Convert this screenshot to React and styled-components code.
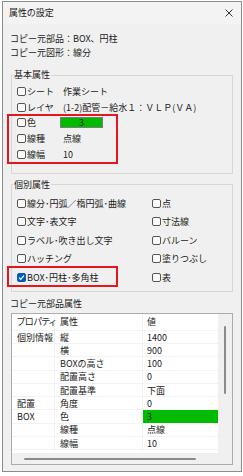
import React from "react";
import styled, { createGlobalStyle } from "styled-components";

const GlobalStyle = createGlobalStyle`
  html, body {
    margin: 0;
    padding: 0;
    background: #ffffff;
  }
  body {
    font-family: "Noto Sans CJK JP", "Noto Sans", sans-serif;
    font-size: 9px;
    color: #1b1b1b;
  }
`;

const Window = styled.div`
  box-sizing: border-box;
  width: 240px;
  height: 471px;
  margin: 1px 0 0 2px;
  border: 1px solid #8c8c8c;
  background: #f0f0f0;
  display: flex;
  flex-direction: column;
`;

const TitleBar = styled.div`
  height: 22px;
  display: flex;
  align-items: center;
  justify-content: space-between;
  padding: 0 8px 0 6px;
  background: #f3f3f3;
`;

const Title = styled.span`
  line-height: 14px;
  font-feature-settings: "palt";
`;

const Body = styled.div`
  display: flex;
  flex-direction: column;
  padding: 8px 8px 0 8px;
`;

const InfoLine = styled.div`
  line-height: 14px;
  margin-left: -1px;
`;

const Group = styled.fieldset`
  margin: ${(p) => p.$top}px 0 0 0;
  padding: 0;
  border: 1px solid #d6d6d6;
  min-width: 0;
`;

const Legend = styled.legend`
  margin-left: 1px;
  padding: 0 1px;
  line-height: 14px;
`;

const BasicRows = styled.div`
  padding: 2px 0 11px 5px;
`;

const AttrRow = styled.div`
  display: flex;
  align-items: center;
  height: 15.6px;
`;

const CheckLabel = styled.label`
  display: flex;
  align-items: center;
  width: ${(p) => p.$width || "auto"};
  flex: none;
  white-space: nowrap;
`;

const Box = styled.span`
  box-sizing: border-box;
  width: 9px;
  height: 9px;
  border: 1px solid ${(p) => (p.$checked ? "#005fb8" : "#555555")};
  border-radius: 2px;
  background: ${(p) => (p.$checked ? "#005fb8" : "#fbfbfb")};
  display: flex;
  align-items: center;
  justify-content: center;
  margin-right: 1px;
  flex: none;
`;

const Value = styled.span`
  white-space: nowrap;
`;

const Swatch = styled.span`
  box-sizing: border-box;
  width: 43px;
  height: 11px;
  margin-left: -3px;
  background: #00bb00;
  border: 1px solid #7c7c7c;
  display: flex;
  align-items: center;
  justify-content: center;
  line-height: 9px;
`;

const Marked = styled.div`
  position: relative;
  &::after {
    content: "";
    position: absolute;
    left: -10px;
    top: ${(p) => p.$top}px;
    bottom: ${(p) => p.$bottom}px;
    width: 111px;
    box-sizing: border-box;
    border: 2px solid #e5161d;
    pointer-events: none;
  }
`;

const KindGrid = styled.div`
  display: grid;
  grid-template-columns: 135px 1fr;
  grid-auto-rows: 18.5px;
  padding: 2px 0 5px 5px;
`;

const KindCell = styled.div`
  display: flex;
  align-items: center;
  height: 100%;
`;

const SectionLabel = styled.div`
  line-height: 14px;
  margin: 5px 0 1.5px -1px;
`;

const Table = styled.div`
  box-sizing: border-box;
  height: 152px;
  border: 1px solid #acacac;
  display: grid;
  grid-template-columns: 206px 13px;
  grid-template-rows: 139px 11px;
`;

const List = styled.div`
  background: #ffffff;
  display: grid;
  grid-template-columns: 43px 88px 75px;
  grid-template-rows: 17px;
  grid-auto-rows: 13.25px;
  align-content: start;
`;

const Cell = styled.div`
  display: flex;
  align-items: center;
  padding-left: ${(p) => p.$pad}px;
  border-right: ${(p) => (p.$last ? "none" : "1px solid #f0f0f0")};
  border-bottom: 1px solid #f3f3f3;
  background: ${(p) => p.$bg || "transparent"};
  white-space: nowrap;
  font-feature-settings: ${(p) => (p.$tight ? '"palt"' : "normal")};
  letter-spacing: ${(p) => (p.$tight ? "-0.3px" : "0")};
`;

const VTrack = styled.div`
  background: #f0f0f0;
  display: flex;
  justify-content: center;
`;

const VThumb = styled.div`
  width: 2px;
  height: 68px;
  margin-top: 12px;
  background: #8a8a8a;
  border-radius: 1px;
`;

const HTrack = styled.div`
  background: #f0f0f0;
  display: flex;
`;

const HThumb = styled.div`
  width: 172px;
  height: 2px;
  margin: 5px 0 0 12px;
  background: #8a8a8a;
  border-radius: 1px;
`;

const Corner = styled.div`
  background: #f0f0f0;
`;

const CloseIcon = () => (
  <svg width="8" height="8" viewBox="0 0 8 8">
    <path d="M0.5 0.5 L7.5 7.5 M7.5 0.5 L0.5 7.5" stroke="#333" strokeWidth="1" />
  </svg>
);

const Check = ({ checked, children, width }) => (
  <CheckLabel $width={width}>
    <Box $checked={checked}>
      {checked && (
        <svg width="7" height="7" viewBox="0 0 7 7">
          <path d="M1.1 3.7 L2.8 5.3 L5.9 1.7" fill="none" stroke="#fff" strokeWidth="1.2" />
        </svg>
      )}
    </Box>
    {children}
  </CheckLabel>
);

const kinds = [
  ["線分･円弧／楕円弧･曲線", "点"],
  ["文字･表文字", "寸法線"],
  ["ラベル･吹き出し文字", "バルーン"],
  ["ハッチング", "塗りつぶし"],
];

const props = [
  ["個別情報", "縦", "1400"],
  ["", "横", "900"],
  ["", "BOXの高さ", "100"],
  ["", "配置高さ", "0"],
  ["", "配置基準", "下面"],
  ["配置", "角度", "0"],
  ["BOX", "色", "3", "#00bb00"],
  ["", "線種", "点線"],
  ["", "線幅", "10"],
];

export default function App() {
  return (
    <>
      <GlobalStyle />
      <Window>
        <TitleBar>
          <Title>属性の設定</Title>
          <CloseIcon />
        </TitleBar>
        <Body>
          <InfoLine>コピー元部品：BOX、円柱</InfoLine>
          <InfoLine>コピー元図形：線分</InfoLine>

          <Group $top={8}>
            <Legend>基本属性</Legend>
            <BasicRows>
              <AttrRow>
                <Check width="46px">シート</Check>
                <Value>作業シート</Value>
              </AttrRow>
              <AttrRow>
                <Check width="46px">レイヤ</Check>
                <Value>(1-2)配管－給水１：ＶＬＰ(ＶＡ)</Value>
              </AttrRow>
              <Marked $top={-1} $bottom={-2}>
                <AttrRow>
                  <Check width="46px">色</Check>
                  <Swatch>3</Swatch>
                </AttrRow>
                <AttrRow>
                  <Check width="46px">線種</Check>
                  <Value>点線</Value>
                </AttrRow>
                <AttrRow>
                  <Check width="46px">線幅</Check>
                  <Value>10</Value>
                </AttrRow>
              </Marked>
            </BasicRows>
          </Group>

          <Group $top={4}>
            <Legend>個別属性</Legend>
            <KindGrid>
              {kinds.map(([a, b]) => (
                <React.Fragment key={a}>
                  <KindCell>
                    <Check>{a}</Check>
                  </KindCell>
                  <KindCell>
                    <Check>{b}</Check>
                  </KindCell>
                </React.Fragment>
              ))}
              <Marked $top={-1.5} $bottom={-1}>
                <KindCell>
                  <Check checked>BOX･円柱･多角柱</Check>
                </KindCell>
              </Marked>
              <KindCell>
                <Check>表</Check>
              </KindCell>
            </KindGrid>
          </Group>

          <SectionLabel>コピー元部品属性</SectionLabel>
          <Table>
            <List>
              <Cell $pad={5} $tight>プロパティ</Cell>
              <Cell $pad={5}>属性</Cell>
              <Cell $pad={4} $last>値</Cell>
              {props.map(([a, b, c, bg], i) => (
                <React.Fragment key={i}>
                  <Cell $pad={5}>{a}</Cell>
                  <Cell $pad={5}>{b}</Cell>
                  <Cell $pad={4} $last $bg={bg}>{c}</Cell>
                </React.Fragment>
              ))}
            </List>
            <VTrack>
              <VThumb />
            </VTrack>
            <HTrack>
              <HThumb />
            </HTrack>
            <Corner />
          </Table>
        </Body>
      </Window>
    </>
  );
}
